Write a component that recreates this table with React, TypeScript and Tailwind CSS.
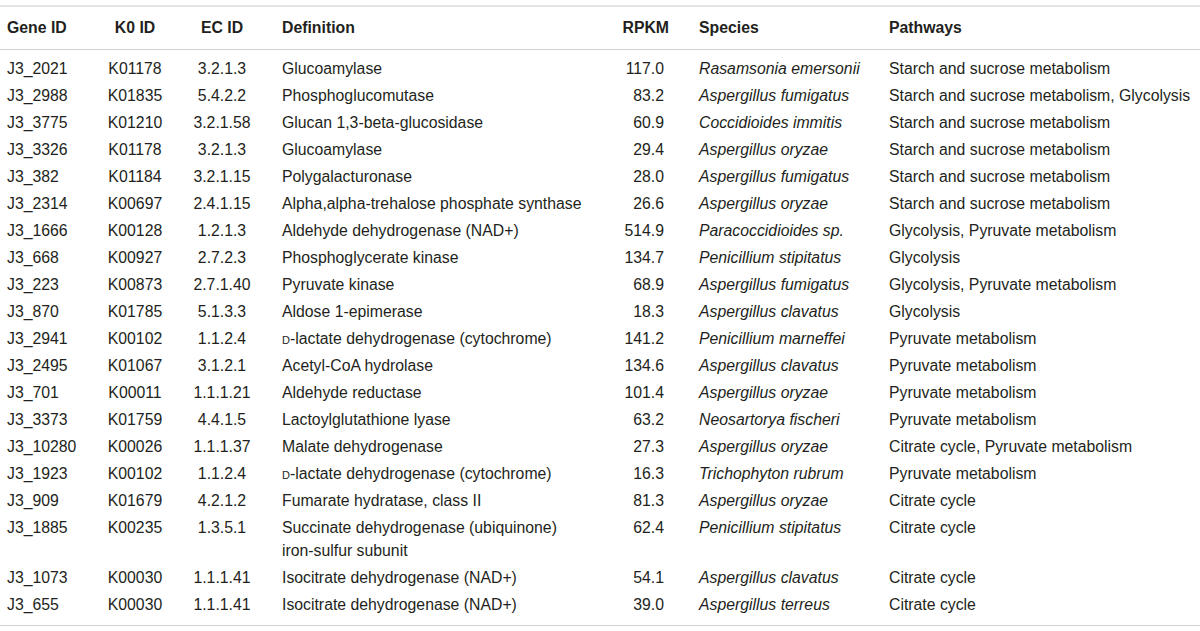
import type { ReactNode } from "react";

// ── Data ──────────────────────────────────────────────────────────────────────

type Row = {
    gene: string;
    ko: string;
    ec: string;
    definition: ReactNode;
    rpkm: string;
    species: string;
    pathways: string;
};

const Dsc = () => <span className="[font-variant-caps:small-caps]">d</span>;

const ROWS: Row[] = [
    { gene: "J3_2021", ko: "K01178", ec: "3.2.1.3", definition: "Glucoamylase", rpkm: "117.0", species: "Rasamsonia emersonii", pathways: "Starch and sucrose metabolism" },
    { gene: "J3_2988", ko: "K01835", ec: "5.4.2.2", definition: "Phosphoglucomutase", rpkm: "83.2", species: "Aspergillus fumigatus", pathways: "Starch and sucrose metabolism, Glycolysis" },
    { gene: "J3_3775", ko: "K01210", ec: "3.2.1.58", definition: "Glucan 1,3-beta-glucosidase", rpkm: "60.9", species: "Coccidioides immitis", pathways: "Starch and sucrose metabolism" },
    { gene: "J3_3326", ko: "K01178", ec: "3.2.1.3", definition: "Glucoamylase", rpkm: "29.4", species: "Aspergillus oryzae", pathways: "Starch and sucrose metabolism" },
    { gene: "J3_382", ko: "K01184", ec: "3.2.1.15", definition: "Polygalacturonase", rpkm: "28.0", species: "Aspergillus fumigatus", pathways: "Starch and sucrose metabolism" },
    { gene: "J3_2314", ko: "K00697", ec: "2.4.1.15", definition: "Alpha,alpha-trehalose phosphate synthase", rpkm: "26.6", species: "Aspergillus oryzae", pathways: "Starch and sucrose metabolism" },
    { gene: "J3_1666", ko: "K00128", ec: "1.2.1.3", definition: "Aldehyde dehydrogenase (NAD+)", rpkm: "514.9", species: "Paracoccidioides sp.", pathways: "Glycolysis, Pyruvate metabolism" },
    { gene: "J3_668", ko: "K00927", ec: "2.7.2.3", definition: "Phosphoglycerate kinase", rpkm: "134.7", species: "Penicillium stipitatus", pathways: "Glycolysis" },
    { gene: "J3_223", ko: "K00873", ec: "2.7.1.40", definition: "Pyruvate kinase", rpkm: "68.9", species: "Aspergillus fumigatus", pathways: "Glycolysis, Pyruvate metabolism" },
    { gene: "J3_870", ko: "K01785", ec: "5.1.3.3", definition: "Aldose 1-epimerase", rpkm: "18.3", species: "Aspergillus clavatus", pathways: "Glycolysis" },
    { gene: "J3_2941", ko: "K00102", ec: "1.1.2.4", definition: <><Dsc />-lactate dehydrogenase (cytochrome)</>, rpkm: "141.2", species: "Penicillium marneffei", pathways: "Pyruvate metabolism" },
    { gene: "J3_2495", ko: "K01067", ec: "3.1.2.1", definition: "Acetyl-CoA hydrolase", rpkm: "134.6", species: "Aspergillus clavatus", pathways: "Pyruvate metabolism" },
    { gene: "J3_701", ko: "K00011", ec: "1.1.1.21", definition: "Aldehyde reductase", rpkm: "101.4", species: "Aspergillus oryzae", pathways: "Pyruvate metabolism" },
    { gene: "J3_3373", ko: "K01759", ec: "4.4.1.5", definition: "Lactoylglutathione lyase", rpkm: "63.2", species: "Neosartorya fischeri", pathways: "Pyruvate metabolism" },
    { gene: "J3_10280", ko: "K00026", ec: "1.1.1.37", definition: "Malate dehydrogenase", rpkm: "27.3", species: "Aspergillus oryzae", pathways: "Citrate cycle, Pyruvate metabolism" },
    { gene: "J3_1923", ko: "K00102", ec: "1.1.2.4", definition: <><Dsc />-lactate dehydrogenase (cytochrome)</>, rpkm: "16.3", species: "Trichophyton rubrum", pathways: "Pyruvate metabolism" },
    { gene: "J3_909", ko: "K01679", ec: "4.2.1.2", definition: "Fumarate hydratase, class II", rpkm: "81.3", species: "Aspergillus oryzae", pathways: "Citrate cycle" },
    { gene: "J3_1885", ko: "K00235", ec: "1.3.5.1", definition: <>Succinate dehydrogenase (ubiquinone)<br />iron-sulfur subunit</>, rpkm: "62.4", species: "Penicillium stipitatus", pathways: "Citrate cycle" },
    { gene: "J3_1073", ko: "K00030", ec: "1.1.1.41", definition: "Isocitrate dehydrogenase (NAD+)", rpkm: "54.1", species: "Aspergillus clavatus", pathways: "Citrate cycle" },
    { gene: "J3_655", ko: "K00030", ec: "1.1.1.41", definition: "Isocitrate dehydrogenase (NAD+)", rpkm: "39.0", species: "Aspergillus terreus", pathways: "Citrate cycle" },
];

// ── Table ─────────────────────────────────────────────────────────────────────

export default function App() {
    return (
        <div
            className="w-[1200px] h-[631px] bg-white pt-[5px] text-[#231f20] text-[15.8px] overflow-hidden"
            style={{ fontFamily: '"Liberation Sans", Arial, sans-serif' }}
        >
            <table className="w-full table-fixed border-collapse">
                <colgroup>
                    <col className="w-[96px]" />
                    <col className="w-[78px]" />
                    <col className="w-[96px]" />
                    <col className="w-[330px]" />
                    <col className="w-[75px]" />
                    <col className="w-[202px]" />
                    <col />
                </colgroup>
                <thead>
                    <tr className="h-[43px] border-t-2 border-t-[#e4e4e4] border-b border-b-[#d2d2d2] font-bold">
                        <th className="pl-[7px] text-left">Gene ID</th>
                        <th className="text-center">K0 ID</th>
                        <th className="text-center">EC ID</th>
                        <th className="pl-[12px] text-left">Definition</th>
                        <th className="pr-[6px] text-right">RPKM</th>
                        <th className="pl-[24px] text-left">Species</th>
                        <th className="pl-[12px] text-left">Pathways</th>
                    </tr>
                </thead>
                <tbody className="border-b border-b-[#d2d2d2]">
                    {ROWS.map((r, i) => {
                        const first = i === 0;
                        const last = i === ROWS.length - 1;
                        const pad = `${first ? "pt-[7px]" : "pt-[2px]"} ${last ? "pb-[9px]" : "pb-[2px]"}`;
                        return (
                            <tr key={r.gene} className="align-top leading-[23px]">
                                <td className={`pl-[7px] whitespace-nowrap ${pad}`}>{r.gene}</td>
                                <td className={`text-center whitespace-nowrap ${pad}`}>{r.ko}</td>
                                <td className={`text-center whitespace-nowrap ${pad}`}>{r.ec}</td>
                                <td className={`pl-[12px] whitespace-nowrap ${pad}`}>{r.definition}</td>
                                <td className={`pr-[11px] text-right whitespace-nowrap ${pad}`}>{r.rpkm}</td>
                                <td className={`pl-[24px] italic whitespace-nowrap ${pad}`}>{r.species}</td>
                                <td className={`pl-[12px] whitespace-nowrap ${pad}`}>{r.pathways}</td>
                            </tr>
                        );
                    })}
                </tbody>
            </table>
        </div>
    );
}
